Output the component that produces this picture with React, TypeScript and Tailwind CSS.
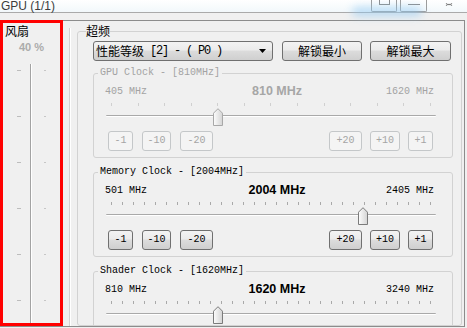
import clsx from "clsx";

const mono = "font-['Liberation_Mono',monospace]";
const cjk = "font-['Noto_Sans_CJK_SC','Liberation_Sans',sans-serif]";

type ClockProps = {
  title: string;
  min: number;
  max: number;
  value: number;
  ticks: number;
  disabled?: boolean;
  showButtons?: boolean;
  className?: string;
};

function Thumb({ left, disabled }: { left: number; disabled?: boolean }) {
  return (
    <svg className="absolute top-[10px]" style={{ left }} width="10" height="18" viewBox="0 0 10 18">
      <defs>
        <linearGradient id="thumbFill" x1="0" y1="0" x2="1" y2="0">
          <stop offset="0" stopColor="#fdfdfd" />
          <stop offset="1" stopColor="#d4d4d4" />
        </linearGradient>
      </defs>
      <path
        d="M0.5 17.5V5.2L5 0.7l4.5 4.5v12.3z"
        fill="url(#thumbFill)"
        stroke={disabled ? "#a8a8a8" : "#7b7b7b"}
        strokeLinejoin="round"
      />
    </svg>
  );
}

function Btn({ label, w, disabled }: { label: string; w: string; disabled?: boolean }) {
  return (
    <div
      className={clsx(
        "flex h-[20px] items-center justify-center rounded-[3px] border text-[10px] leading-none",
        mono,
        w,
        disabled
          ? "border-[#c4c7c9] bg-[#f4f4f4] text-[#a5a5a5]"
          : "border-[#707070] bg-[linear-gradient(#f3f3f3,#ebebeb_45%,#dcdcdc_50%,#cfcfcf)] text-black"
      )}
    >
      {label}
    </div>
  );
}

function ClockBox({ title, min, max, value, ticks, disabled, showButtons = true, className }: ClockProps) {
  const frac = (value - min) / (max - min);
  const thumbLeft = Math.round(frac * 319 + 0.5);
  const dim = disabled ? "text-[#a3a3a3]" : "text-black";

  return (
    <div className={clsx("w-[360px] rounded-[3px] border border-[#d2d2d2] pb-[6px]", className)}>
      <div className={clsx("-mt-[7px] ml-[4px] h-[12px] w-fit bg-[#f0f0f0] px-[2px] text-[10px] leading-[12px]", mono, dim)}>
        {title}
      </div>

      <div className="mt-[5px] flex h-[14px] items-center pl-[11px] pr-[18px]">
        <span className={clsx("text-[10px]", mono, dim)}>{min} MHz</span>
        <span
          className={clsx(
            "flex-1 pl-[21px] text-center font-['Liberation_Sans',sans-serif] text-[12.5px] font-bold",
            disabled ? "text-[#a6a6a6]" : "text-black"
          )}
        >
          {value} MHz
        </span>
        <span className={clsx("text-[10px]", mono, dim)}>{max} MHz</span>
      </div>

      <div className="relative ml-[12px] h-[29px] w-[330px]">
        <div className="flex justify-between px-[5px] pt-[5px]">
          {Array.from({ length: ticks }).map((_, i) => (
            <div key={i} className={clsx("h-[3px] w-px", disabled ? "bg-[#d0d0d0]" : "bg-[#a9a9a9]")} />
          ))}
        </div>
        <div className="mt-[9px] h-[2px] rounded-[1px] border-t border-[#a9a9a9] bg-white" />
        <Thumb left={thumbLeft} disabled={disabled} />
      </div>

      {showButtons ? (
        <div className="mt-[4px] flex pl-[14px] pr-[19px]">
          <div className="flex gap-[9px]">
            <Btn label="-1" w="w-[25px]" disabled={disabled} />
            <Btn label="-10" w="w-[29px]" disabled={disabled} />
            <Btn label="-20" w="w-[33px]" disabled={disabled} />
          </div>
          <div className="ml-auto flex gap-[8px]">
            <Btn label="+20" w="w-[33px]" disabled={disabled} />
            <Btn label="+10" w="w-[30px]" disabled={disabled} />
            <Btn label="+1" w="w-[25px]" disabled={disabled} />
          </div>
        </div>
      ) : (
        <div className="mt-[4px] h-[20px]" />
      )}
    </div>
  );
}

function FanColumn() {
  return (
    <div className="flex h-[306px] w-[63px] shrink-0 flex-col border-[3px] border-[#ff0000]">
      <div className={clsx("mt-[1px] pl-[2px] text-[12px] leading-[14px]", cjk)}>风扇</div>
      <div className="mt-[3px] text-center font-['Liberation_Sans',sans-serif] text-[11px] font-bold leading-[13px] text-[#ababab]">
        40 %
      </div>
      <div className="mt-[10px] flex flex-1 pl-[14px]">
        <div className="flex w-[4px] flex-col gap-[45px] pt-[6px]">
          {Array.from({ length: 6 }).map((_, i) => (
            <div key={i} className="h-px w-[4px] bg-[#bdbdbd]" />
          ))}
        </div>
        <div className="ml-[9px] h-full w-[2px] border-l border-[#a3a3a3] bg-white" />
        <div className="ml-[12px] flex w-[2px] flex-col gap-[45px] pt-[6px]">
          {Array.from({ length: 6 }).map((_, i) => (
            <div key={i} className="h-px w-[2px] bg-[#c6c6c6]" />
          ))}
        </div>
      </div>
    </div>
  );
}

function OverclockGroup() {
  return (
    <div className="mt-[10px] w-[385px] shrink-0 rounded-[3px] border border-[#d2d2d2]">
      <div className={clsx("-mt-[8px] ml-[8px] h-[14px] w-fit bg-[#f0f0f0] text-[12px] leading-[14px]", cjk)}>超频</div>

      <div className="pl-[15px]">
        <div className="mt-[3px] flex h-[20px]">
          <div className="flex w-[180px] items-center rounded-[3px] border border-[#707070] bg-[linear-gradient(#f3f3f3,#ebebeb_45%,#dcdcdc_50%,#cfcfcf)] pl-[2px] pr-[6px]">
            <span className={clsx("text-[12px] leading-none", cjk)}>性能等级</span>
            <span className={clsx("whitespace-pre text-[12px] leading-none tracking-[-1.2px]", mono)}> [2] - ( P0 )</span>
            <svg className="ml-auto" width="7" height="4" viewBox="0 0 7 4">
              <path d="M0 0h7L3.5 4z" fill="#000" />
            </svg>
          </div>
          <div
            className={clsx(
              "ml-[9px] flex w-[80px] items-center justify-center rounded-[3px] border border-[#707070] bg-[linear-gradient(#f3f3f3,#ebebeb_45%,#dcdcdc_50%,#cfcfcf)] text-[12px]",
              cjk
            )}
          >
            解锁最小
          </div>
          <div
            className={clsx(
              "ml-[8px] flex w-[81px] items-center justify-center rounded-[3px] border border-[#707070] bg-[linear-gradient(#f3f3f3,#ebebeb_45%,#dcdcdc_50%,#cfcfcf)] text-[12px]",
              cjk
            )}
          >
            解锁最大
          </div>
        </div>

        <ClockBox className="mt-[12px]" title="GPU Clock - [810MHz]" min={405} max={1620} value={810} ticks={13} disabled />
        <ClockBox className="mt-[14px]" title="Memory Clock - [2004MHz]" min={501} max={2405} value={2004} ticks={30} />
        <ClockBox
          className="mt-[14px]"
          title="Shader Clock - [1620MHz]"
          min={810}
          max={3240}
          value={1620}
          ticks={30}
          showButtons={false}
        />
      </div>
    </div>
  );
}

export default function App() {
  return (
    <div className="relative h-[328px] w-[467px] overflow-hidden bg-[#f0f0f0] text-black">
      <div className="flex h-[13px] items-start border-b border-[#aaaaaa] bg-[linear-gradient(#ffffff,#f2f8fb)]">
        <span className="pl-[1px] font-['Liberation_Sans',sans-serif] text-[12px] leading-[12px] text-[#3c3c3c]">
          GPU (1/1)
        </span>
        <div className="ml-auto flex h-[12px] items-start pr-[14px]">
          <div className="flex h-[12px] w-[26px] justify-center rounded-b-[2px] border-x border-b border-[#9c9c9c]">
            <div className="h-[5px] w-[11px] border-x border-b border-[#8a8a8a]" />
          </div>
          <div className="ml-[3px] flex h-[12px] w-[27px] justify-center rounded-b-[2px] border-x border-b border-[#9c9c9c] pt-[4px]">
            <div className="h-px w-[12px] bg-[#8a8a8a]" />
          </div>
          <svg className="ml-[18px] mt-[2px]" width="8" height="5" viewBox="0 0 8 5">
            <path d="M1 1q1.5 3 3 1.5q1.5 -1.5 3 1.5M1 4q1.5 -3 3 -1.5q1.5 1.5 3 -1.5" fill="none" stroke="#6f6f6f" strokeWidth="0.8" />
          </svg>
        </div>
      </div>
      <div className="h-[7px]" />

      <div className="flex h-[307px] w-[465px] border-b border-r border-[#8c8c8c]">
        <FanColumn />
        <div className="flex h-[306px] flex-1 overflow-hidden border-t border-[#8c8c8c]">
          <div className="w-[14px] shrink-0 pt-[7px]">
            <div className="ml-[6px] h-full w-[2px] border-l border-[#d2d2d2] bg-white" />
          </div>
          <OverclockGroup />
        </div>
      </div>

      <div className="pointer-events-none absolute left-[352px] top-[7px] h-[9px] w-[70px] rounded-full bg-[#8fc8f2] opacity-60 blur-[4px]" />
    </div>
  );
}
